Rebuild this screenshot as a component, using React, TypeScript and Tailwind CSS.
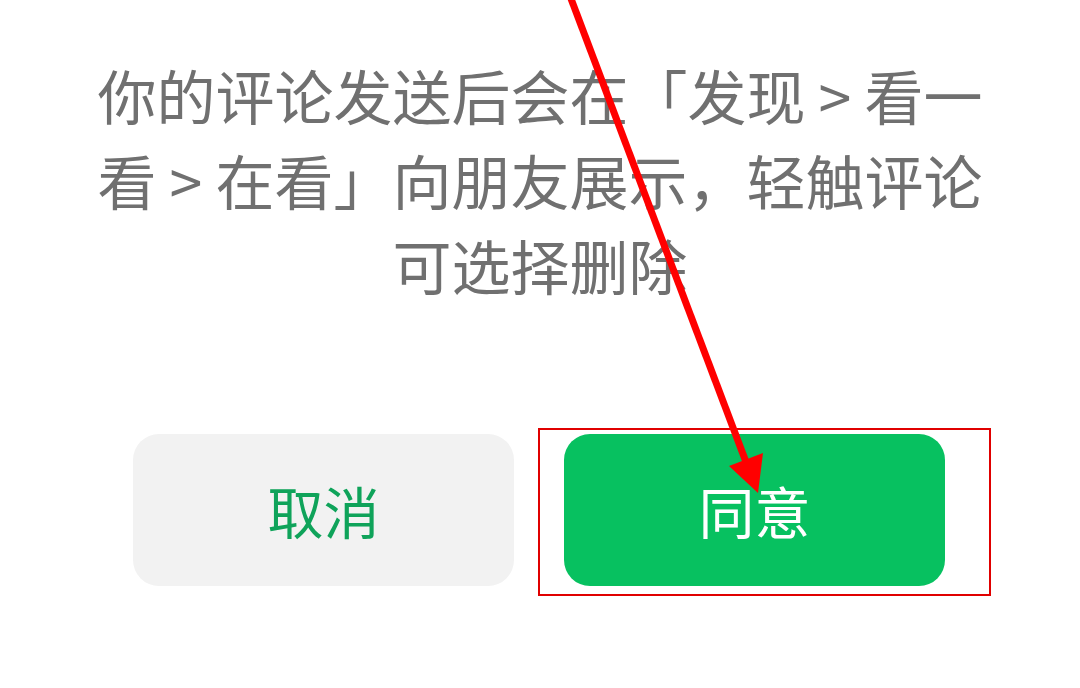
import type { FC } from 'react'

const FONT = "font-['Noto_Sans_CJK_SC','Noto_Sans',sans-serif]"

// 标注箭头（覆盖在内容上）
const Arrow: FC = () => (
  <svg
    className="absolute inset-0 pointer-events-none"
    width={1080}
    height={688}
    viewBox="0 0 1080 688"
  >
    <line x1={570} y1={-4} x2={746} y2={462} stroke="#ff0000" strokeWidth={7} />
    <polygon points="758,493 729,466 763,453" fill="#ff0000" />
  </svg>
)

export default function App() {
  return (
    <div className={`relative w-[1080px] h-[688px] bg-white overflow-hidden ${FONT}`}>
      {/* 说明文字 */}
      <div className="pt-[52px] text-center text-[59px] leading-[85px] text-[#707070]">
        <div>你的评论发送后会在「发现 &gt; 看一</div>
        <div>看 &gt; 在看」向朋友展示，轻触评论</div>
        <div>可选择删除</div>
      </div>

      {/* 按钮 */}
      <div className="mt-[121px] flex items-start pl-[133px]">
        <button
          type="button"
          className="mt-[6px] w-[381px] h-[152px] rounded-[26px] bg-[#f2f2f2] text-[#0fa35a] text-[56px] flex items-center justify-center"
        >
          取消
        </button>
        <div className="ml-[24px] border-2 border-[#e00000] pl-[24px] pr-[44px] pt-[4px] pb-[8px]">
          <button
            type="button"
            className="w-[381px] h-[152px] rounded-[26px] bg-[#07c160] text-white text-[56px] flex items-center justify-center"
          >
            同意
          </button>
        </div>
      </div>

      <Arrow />
    </div>
  )
}
